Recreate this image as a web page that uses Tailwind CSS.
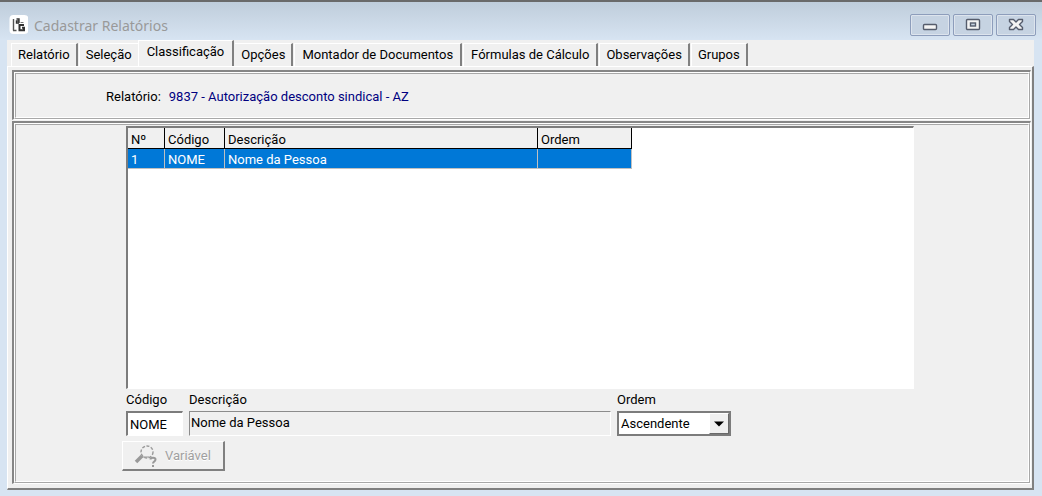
<!DOCTYPE html>
<html lang="pt-BR">
<head>
    <meta charset="UTF-8" />
    <meta name="viewport" content="width=device-width, initial-scale=1.0" />
    <title>Cadastrar Relatórios</title>
    <script src="https://cdn.jsdelivr.net/npm/@tailwindcss/browser@4"></script>
</head>
<body class="min-h-screen flex flex-col bg-[#d7e4f2] font-['Roboto','Liberation_Sans',sans-serif] text-[13px] leading-4 text-black">

<!-- Title bar -->
<header class="flex items-start justify-between h-10 pl-2 pr-1.5 border-t-2 border-[#6a6a6a] bg-linear-to-b from-[#bfcddb] to-[#d7e4f2]">
    <div class="flex items-center gap-1.5 pt-3">
        <svg class="w-5 h-5" viewBox="0 0 20 20" fill="none">
            <rect x="1.500" y="0" width="19" height="19" rx="4" fill="#fff"/>
            <path d="M5.500 4v11.500M5 15.500h3.500" stroke="#555" stroke-width="1.400"/>
            <path d="M8.500 4h2.500v4M11 6H8.500v2h2.500" stroke="#333" stroke-width="1.400"/>
            <path d="M16 10h-4.500v5.300h4.500v-2.500h-2" stroke="#333" stroke-width="2"/>
            <path d="M12.500 7.500h3" stroke="#777"/>
        </svg>
        <h1 class="font-['Noto_Sans',sans-serif] text-sm leading-5 pt-0.5 text-[#999]">Cadastrar Relatórios</h1>
    </div>
    <div class="flex gap-[3px] pt-3">
        <button type="button" aria-label="Minimizar" class="flex items-center justify-center w-10 h-[22px] rounded-xs border border-[#8d9dbb] bg-[#c6d3e2] inset-ring inset-ring-white/40">
            <svg class="w-4 h-4" viewBox="0 0 16 16"><rect x="1.500" y="7.500" width="13" height="5" rx="1" fill="#f4f4f4" stroke="#555c6c" stroke-width="1.400"/></svg>
        </button>
        <button type="button" aria-label="Maximizar" class="flex items-center justify-center w-10 h-[22px] rounded-xs border border-[#8d9dbb] bg-[#c6d3e2] inset-ring inset-ring-white/40">
            <svg class="w-4 h-4" viewBox="0 0 16 16"><rect x="1.500" y="2.500" width="13" height="10" rx="1" fill="#f4f4f4" stroke="#555c6c" stroke-width="1.400"/><rect x="5.500" y="6" width="5" height="3" fill="#c6d3e2" stroke="#555c6c" stroke-width="1.400"/></svg>
        </button>
        <button type="button" aria-label="Fechar" class="flex items-center justify-center w-10 h-[22px] rounded-xs border border-[#8d9dbb] bg-[#c6d3e2] inset-ring inset-ring-white/40">
            <svg class="w-4 h-4" viewBox="0 0 16 16"><path d="M1.500 2.500h4L8 5l2.500-2.500h4v2L11.500 7.500l3 3v2h-4L8 10l-2.500 2.500h-4v-2l3-3-3-3z" fill="#f4f4f4" stroke="#555c6c" stroke-width="1.400" stroke-linejoin="round"/></svg>
        </button>
    </div>
</header>

<main class="flex-1 flex flex-col ml-[7px] mr-2 mb-1.5 bg-[#f0f0f0]">
    <!-- Tabs -->
    <nav role="tablist" class="flex items-end h-[26px] pl-1">
        <button type="button" role="tab" class="h-[23px] px-1.5 mr-px border-t border-l border-white border-r-2 border-r-[#808080]">Relatório</button>
        <button type="button" role="tab" class="h-[23px] px-1.5 border-t border-l border-white">Seleção</button>
        <button type="button" role="tab" aria-selected="true" class="h-[26px] px-2 pb-1 mr-px border-t border-l border-white border-r-2 border-r-[#808080]">Classificação</button>
        <button type="button" role="tab" class="h-[23px] px-1.5 mr-px border-t border-white border-r-2 border-r-[#808080]">Opções</button>
        <button type="button" role="tab" class="h-[23px] px-[7px] mr-px border-t border-l border-white border-r-2 border-r-[#808080]">Montador de Documentos</button>
        <button type="button" role="tab" class="h-[23px] px-[7px] mr-px border-t border-l border-white border-r-2 border-r-[#808080]">Fórmulas de Cálculo</button>
        <button type="button" role="tab" class="h-[23px] px-1.5 mr-px border-t border-l border-white border-r-2 border-r-[#808080]">Observações</button>
        <button type="button" role="tab" class="h-[23px] px-1.5 border-t border-l border-white border-r-2 border-r-[#808080]">Grupos</button>
    </nav>

    <div role="tabpanel" class="flex-1 flex flex-col gap-px pt-[3px] pl-1 pr-px pb-1 border-t border-l border-white border-r-2 border-b-2 border-r-[#808080] border-b-[#808080]">
        <!-- Selected report -->
        <section class="border-t-2 border-l-2 border-[#868686] border-r border-b border-r-white border-b-white">
            <div class="border-t border-l border-white border-r border-b border-r-[#a8a8a8] border-b-[#a8a8a8]">
                <p class="flex gap-2 h-[45px] items-center pl-[90px] pt-0.5 border border-[#a8a8a8] border-r-white border-b-white">
                    <span>Relatório:</span>
                    <span class="text-[#000080]">9837 - Autorização desconto sindical - AZ</span>
                </p>
            </div>
        </section>

        <!-- Sort fields -->
        <section class="flex-1 flex flex-col border-t-2 border-l-2 border-[#868686] border-r border-b border-r-white border-b-white">
            <div class="flex-1 flex flex-col border-t border-l border-white border-r border-b border-r-[#a8a8a8] border-b-[#a8a8a8]">
                <div class="flex-1 pl-[110px] pt-px border border-[#a8a8a8] border-r-white border-b-white">
                    <div class="w-[788px] max-w-full h-[263px] bg-white border-t-2 border-l-2 border-[#7c7c7c] border-r border-b border-r-white border-b-white">
                        <table class="w-[504px] table-fixed border-separate border-spacing-0 text-left">
                            <thead class="bg-[#f0f0f0]">
                                <tr class="h-[21px]">
                                    <th class="w-[37px] pl-[3px] pt-1 font-normal border-r border-b border-black">Nº</th>
                                    <th class="w-[60px] pl-[3px] pt-1 font-normal border-r border-b border-black">Código</th>
                                    <th class="pl-[3px] pt-1 font-normal border-r border-b border-black">Descrição</th>
                                    <th class="w-[94px] pl-[3px] pt-1 font-normal border-r border-b border-black">Ordem</th>
                                </tr>
                            </thead>
                            <tbody class="bg-[#0078d7] text-white">
                                <tr class="h-5">
                                    <td class="pl-[3px] pt-0.5 border-r border-b border-[#c0c0c0]">1</td>
                                    <td class="pl-[3px] pt-0.5 border-r border-b border-[#c0c0c0]">NOME</td>
                                    <td class="pl-[3px] pt-0.5 border-r border-b border-[#c0c0c0]">Nome da Pessoa</td>
                                    <td class="pl-[3px] pt-0.5 border-r border-b border-[#c0c0c0]"></td>
                                </tr>
                            </tbody>
                        </table>
                    </div>

                    <form class="pt-[3px]">
                        <div class="flex gap-1.5">
                            <div class="flex flex-col gap-[3px] w-[57px]">
                                <label for="codigo">Código</label>
                                <input id="codigo" type="text" value="NOME" class="w-full h-[25px] px-0.5 bg-white border-t-2 border-l-2 border-[#7c7c7c] border-r border-b border-r-white border-b-white" />
                            </div>
                            <div class="flex flex-col gap-[3px] w-[422px]">
                                <label for="descricao">Descrição</label>
                                <input id="descricao" type="text" value="Nome da Pessoa" readonly class="w-full h-[25px] px-px pb-0.5 bg-[#f0f0f0] border border-[#8c8c8c] border-r-white border-b-white" />
                            </div>
                            <div class="flex flex-col gap-[3px] w-[114px]">
                                <label for="ordem">Ordem</label>
                                <div class="relative">
                                    <select id="ordem" class="block appearance-none w-full h-[25px] px-0.5 bg-white border-2 border-[#7c7c7c]">
                                        <option>Ascendente</option>
                                        <option>Descendente</option>
                                    </select>
                                    <span class="absolute right-0.5 top-0.5 flex items-center justify-center w-5 h-[21px] pointer-events-none bg-[#f0f0f0] border border-white border-r-[#696969] border-b-[#696969]">
                                        <svg class="w-2.5 h-1.5" viewBox="0 0 10 6"><path d="M0 0.500h10L5 5.500z" fill="#000"/></svg>
                                    </span>
                                </div>
                            </div>
                        </div>
                        <button type="button" disabled class="flex items-center gap-1 h-[30px] w-[103px] mt-[5px] -ml-1 pl-2.5 text-[#a0a0a0] border border-white border-r-2 border-b-2 border-r-[#808080] border-b-[#808080]">
                            <svg class="w-7 h-6" viewBox="0 0 28 24" fill="none" stroke="#999">
                                <circle cx="14" cy="8" r="6" stroke-width="1.400" stroke-dasharray="3 1.500"/>
                                <path d="M9 13h7"/>
                                <path d="M9 12L3 18" stroke-width="3.500"/>
                                <path d="M17.500 15.500c0-2.500 5-2.500 5 0 0 2-2.500 2-2.500 4M20 21v2" stroke-width="2"/>
                            </svg>
                            <span class="text-shadow-2xs text-shadow-white">Variável</span>
                        </button>
                    </form>
                </div>
            </div>
        </section>
    </div>
</main>
</body>
</html>
